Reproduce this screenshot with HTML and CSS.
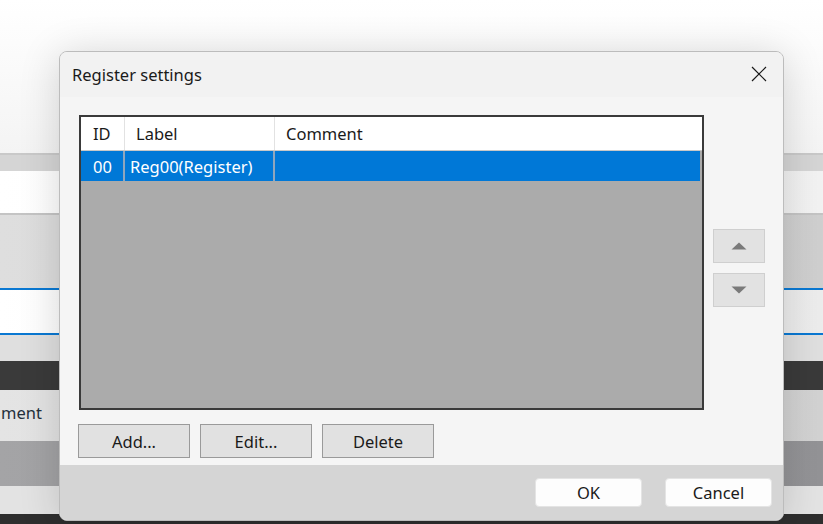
FILE: index.html
```html
<!DOCTYPE html>
<html>
<head>
<meta charset="utf-8">
<link rel="stylesheet" href="styles.css">
</head>
<body>
<div class="bg">
  <div class="band b-top"></div>
  <div class="band b-strip"></div>
  <div class="band b-white1"></div>
  <div class="band b-gray1"></div>
  <div class="band b-blueline"></div>
  <div class="band b-white2"></div>
  <div class="band b-blueline"></div>
  <div class="band b-light1"></div>
  <div class="band b-dark"></div>
  <div class="band b-header"><span class="bg-text">ment</span></div>
  <div class="band b-mid"></div>
  <div class="band b-light2"></div>
  <div class="band b-bottom"></div>
</div>

<div class="dialog">
  <div class="titlebar">
    <span class="title">Register settings</span>
    <svg class="close" width="16" height="16" viewBox="0 0 16 16">
      <path d="M1 1 L15 15 M15 1 L1 15" stroke="#1a1a1a" stroke-width="1.2" fill="none"/>
    </svg>
  </div>
  <div class="body">
    <div class="list-area">
      <div class="list">
        <div class="row head">
          <div class="cell c-id">ID</div>
          <div class="cell c-label">Label</div>
          <div class="cell c-comment">Comment</div>
        </div>
        <div class="row sel">
          <div class="cell c-id">00</div>
          <div class="cell c-label">Reg00(Register)</div>
          <div class="cell c-comment"></div>
        </div>
      </div>
      <div class="movers">
        <div class="mover">
          <svg width="18" height="10" viewBox="0 0 18 10"><path d="M9 1.5 L16.5 8.5 L1.5 8.5 Z" fill="#7a7a7a"/></svg>
        </div>
        <div class="mover">
          <svg width="18" height="10" viewBox="0 0 18 10"><path d="M1.5 1.5 L16.5 1.5 L9 8.5 Z" fill="#7a7a7a"/></svg>
        </div>
      </div>
    </div>
    <div class="actions">
      <div class="btn">Add...</div>
      <div class="btn">Edit...</div>
      <div class="btn">Delete</div>
    </div>
  </div>
  <div class="footer">
    <div class="fbtn">OK</div>
    <div class="fbtn">Cancel</div>
  </div>
</div>
</body>
</html>
```

FILE: styles.css
```css
html, body {
  margin: 0;
  padding: 0;
  width: 823px;
  height: 524px;
  overflow: hidden;
  font-family: "Noto Sans", "Open Sans", sans-serif;
}

.bg {
  display: flex;
  flex-direction: column;
  height: 524px;
}

.band { flex: none; }
.b-top { height: 153px; background: linear-gradient(#ffffff, #f4f4f4); }
.b-strip { height: 18px; background: #d5d5d5; border-top: 2px solid #c9c9c9; box-sizing: border-box; }
.b-white1 { height: 42px; background: linear-gradient(90deg, #ffffff, #f2f2f2); }
.b-gray1 { height: 75px; background: linear-gradient(90deg, #dedede, #cfcfcf); border-top: 2px solid #c4c4c4; box-sizing: border-box; }
.b-blueline { height: 2px; background: #0a78d2; }
.b-white2 { height: 43px; background: linear-gradient(90deg, #ffffff, #ececec); }
.b-light1 { height: 26px; background: #dfdfdf; }
.b-dark { height: 29px; background: #3a3a3a; }
.b-header {
  height: 51px;
  background: linear-gradient(90deg, #e4e4e4, #d2d2d2);
  display: flex;
  align-items: flex-start;
  overflow: hidden;
}
.bg-text {
  margin-top: 11px;
  margin-left: 1px;
  font-size: 16.5px;
  color: #24303c;
  white-space: nowrap;
}
.b-mid { height: 45px; background: linear-gradient(90deg, #a4a4a6, #939396); }
.b-light2 { height: 28px; background: #e3e3e3; }
.b-bottom { height: 10px; background: #2e2e2e; }

/* dialog window (overlay) */
.dialog {
  position: absolute;
  left: 59px;
  top: 51px;
  width: 723px;
  height: 468px;
  border: 1px solid #bcbcbc;
  border-radius: 8px;
  background: #f4f4f4;
  box-shadow: 0 4px 40px rgba(0, 0, 0, 0.16);
  display: flex;
  flex-direction: column;
  overflow: hidden;
}

.titlebar {
  height: 45px;
  flex: none;
  background: #f2f2f2;
  display: flex;
  align-items: center;
  justify-content: space-between;
  padding: 0 16px 0 12px;
  box-sizing: border-box;
}
.title {
  font-size: 16.5px;
  color: #1a1a1a;
}
.close { margin-top: -1px; }

.body {
  flex: 1;
  background: #f5f5f5;
  padding: 18px 0 0 19px;
  display: flex;
  flex-direction: column;
}

.list-area {
  display: flex;
  gap: 9px;
}

.list {
  width: 625px;
  height: 295px;
  box-sizing: border-box;
  border: 2px solid #3a3a3a;
  background: #ababab;
  display: flex;
  flex-direction: column;
}

.row {
  display: flex;
  font-size: 16.5px;
}
.row.head {
  height: 33px;
  background: #ffffff;
  color: #1a1a1a;
  border-bottom: 1px solid #c8c8c8;
}
.row.sel {
  height: 30px;
  background: #0078d7;
  color: #ffffff;
  margin-right: 2px;
}
.cell {
  display: flex;
  align-items: center;
  box-sizing: border-box;
  white-space: nowrap;
}
.head .cell { padding-left: 11px; }
.head .c-id { padding-left: 12px; }
.c-id { width: 44px; }
.c-label { width: 150px; }
.c-comment { flex: 1; }
.head .c-id, .head .c-label { border-right: 1px solid #e2e2e2; }
.sel .c-id { padding-left: 12px; }
.sel .c-label { padding-left: 5px; }
.sel .c-id, .sel .c-label { border-right: 2px solid #8fa6bd; }

.movers {
  padding-top: 114px;
  display: flex;
  flex-direction: column;
  gap: 10px;
}
.mover {
  width: 52px;
  height: 34px;
  box-sizing: border-box;
  background: #e2e2e2;
  border: 1px solid #cfcfcf;
  display: flex;
  align-items: center;
  justify-content: center;
}

.actions {
  display: flex;
  gap: 10px;
  margin-top: 14px;
  margin-left: -1px;
}
.btn {
  width: 112px;
  height: 34px;
  box-sizing: border-box;
  border: 1px solid #9a9a9a;
  background: #e1e1e1;
  font-size: 16.5px;
  color: #1a1a1a;
  display: flex;
  align-items: center;
  justify-content: center;
}

.footer {
  height: 55px;
  flex: none;
  background: #d5d5d5;
  display: flex;
  justify-content: flex-end;
  align-items: center;
  gap: 23px;
  padding-right: 11px;
}
.fbtn {
  width: 107px;
  height: 29px;
  border-radius: 4px;
  background: #fdfdfd;
  border: 1px solid #e4e4e4;
  box-sizing: border-box;
  font-size: 16.5px;
  color: #1a1a1a;
  display: flex;
  align-items: center;
  justify-content: center;
}
```
